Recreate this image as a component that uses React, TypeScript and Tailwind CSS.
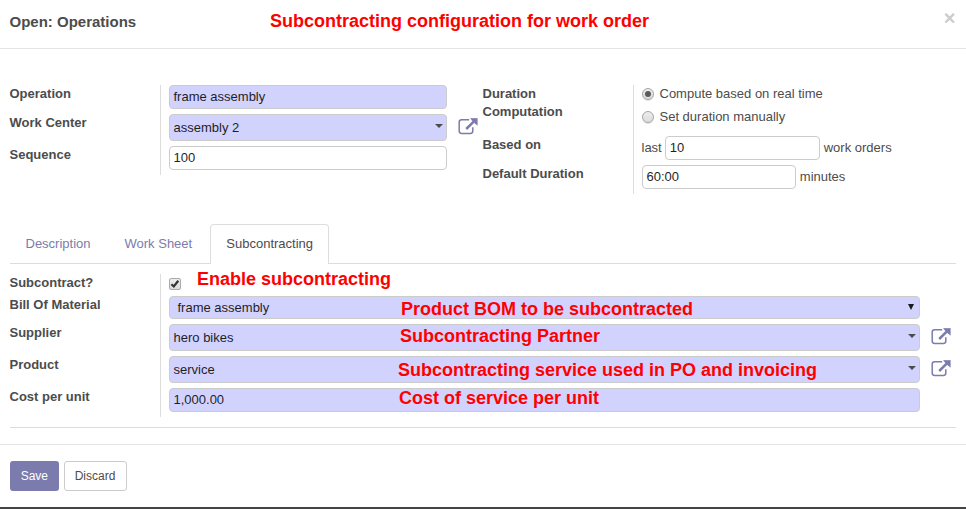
import type { ReactNode } from "react";

const field = "rounded border border-[#cccccc] pl-1 text-[#1f1f1f] flex items-center";

function Label({ children }: { children: ReactNode }) {
  return <div className="w-[150px] shrink-0 font-bold leading-[18px] text-[#4c4c4c]">{children}</div>;
}

function Row({ label, height, children }: { label: ReactNode; height: string; children: ReactNode }) {
  return (
    <div className={`flex ${height}`}>
      <Label>{label}</Label>
      <div className="flex flex-1 items-start border-l border-[#dddddd] pl-2">{children}</div>
    </div>
  );
}

function Caret() {
  return (
    <svg className="ml-auto mr-[3px] mt-[-4px] h-1 w-2 shrink-0" viewBox="0 0 8 4" fill="#4c4c4c">
      <path d="M0 0h8L4 4z" />
    </svg>
  );
}

function OpenIcon() {
  return (
    <svg className="ml-[11px] mt-1 h-[17px] w-5 shrink-0" viewBox="0 0 20 17" fill="none" stroke="#7c7bad">
      <path d="M11.2 1.8H3.6Q1.2 1.8 1.2 4.2V13Q1.2 15.4 3.6 15.4H12.4Q14.8 15.4 14.8 13V9.2" strokeWidth="1.5" />
      <path d="M8.2 11L16.2 3.1" strokeWidth="2.5" />
      <path d="M12.5 0.2H19.4V7.3L17.6 5.9L13.9 2.2z" fill="#7c7bad" stroke="#7c7bad" strokeWidth="0.4" />
    </svg>
  );
}

function Radio({ checked, label }: { checked?: boolean; label: string }) {
  return (
    <div className="flex h-[18px] items-center">
      <span className="flex size-3 items-center justify-center rounded-full border border-[#a5a5a5] bg-linear-to-b from-[#ededed] to-[#dcdcdc] shadow-[0_1px_0_#e2e2e2]">
        {checked && <span className="size-1.5 rounded-full bg-[#5b5b5b]" />}
      </span>
      <span className="ml-1.5">{label}</span>
    </div>
  );
}

function Note({ place, children }: { place: string; children: ReactNode }) {
  return (
    <div className={`absolute whitespace-nowrap text-[18px] font-bold leading-5 text-[#ff0000] ${place}`}>{children}</div>
  );
}

export default function App() {
  return (
    <div className="relative flex h-[509px] w-[966px] flex-col overflow-hidden bg-white font-['Liberation_Sans',Arial,sans-serif] text-[13px] leading-[18px] text-[#4c4c4c]">
      <header className="flex h-[49px] shrink-0 justify-between border-b border-[#e5e5e5] pl-[9.5px] pr-[10.5px]">
        <h4 className="pt-3 text-[15px] font-bold leading-5">Open: Operations</h4>
        <button className="h-5 pt-2 text-[20px] font-bold leading-5 text-[#cccccc]">×</button>
      </header>

      <main className="shrink-0 pl-[9.5px] pr-2.5 pt-9">
        <div className="flex h-[109px]">
          <div className="w-[473px]">
            <Row label="Operation" height="h-[29px]">
              <div className={`${field} h-6 w-[278px] bg-[#d2d2ff]`}>frame assembly</div>
            </Row>
            <Row label="Work Center" height="h-8">
              <div className={`${field} h-[27px] w-[278px] bg-[#d2d2ff]`}>assembly 2<Caret /></div>
              <OpenIcon />
            </Row>
            <Row label="Sequence" height="h-[29px]">
              <div className={`${field} h-6 w-[278px]`}>100</div>
            </Row>
          </div>
          <div className="flex-1">
            <Row label={<>Duration<br />Computation</>} height="h-[51px]">
              <div className="flex flex-col gap-[5px]">
                <Radio checked label="Compute based on real time" />
                <Radio label="Set duration manually" />
              </div>
            </Row>
            <Row label="Based on" height="h-[29px]">
              <span className="mr-[3px] pt-[3px]">last</span>
              <div className={`${field} h-6 w-[155px]`}>10</div>
              <span className="ml-1 pt-[3px]">work orders</span>
            </Row>
            <Row label="Default Duration" height="h-[29px]">
              <div className={`${field} h-6 w-[154.5px]`}>60:00</div>
              <span className="ml-[3.8px] pt-[3px]">minutes</span>
            </Row>
          </div>
        </div>

        <nav className="mt-[30px] flex h-10 border-b border-[#dddddd] leading-[38px] text-[#7c7bad]">
          <span className="w-[99px] pl-4 pt-px">Description</span>
          <span className="w-[101.5px] pl-4 pt-px">Work Sheet</span>
          <span className="h-10 w-[119px] rounded-t border border-b-0 border-[#dddddd] bg-white pl-[15.3px] text-[#4c4c4c]">
            Subcontracting
          </span>
        </nav>

        <section className="border-b border-[#dddddd] pb-2.5 pt-2.5">
          <Row label="Subcontract?" height="h-[22px]">
            <span className="mt-1 flex h-3 w-3 items-center justify-center rounded-[2px] border border-[#aaaaaa] bg-linear-to-b from-[#ededed] to-[#dcdcdc]">
              <svg className="size-2.5 shrink-0" viewBox="0 0 10 10" fill="none" stroke="#333333" strokeWidth="2.2">
                <path d="M1.4 5.3L3.8 7.5L8.3 1.8" />
              </svg>
            </span>
          </Row>
          <Row label="Bill Of Material" height="h-7">
            <div className={`${field} h-[23px] w-[751px] bg-[#d2d2ff]`}>
              <span className="pl-1">frame assembly</span>
              <svg className="ml-auto mr-[5px] mt-[-1px] h-1.5 w-1.5" viewBox="0 0 6 6" fill="#1a1a1a">
                <path d="M0 0h6L3 6z" />
              </svg>
            </div>
          </Row>
          <Row label="Supplier" height="h-8">
            <div className={`${field} h-[27px] w-[751px] bg-[#d2d2ff]`}>hero bikes<Caret /></div>
            <OpenIcon />
          </Row>
          <Row label="Product" height="h-8">
            <div className={`${field} h-[27px] w-[751px] bg-[#d2d2ff]`}>service<Caret /></div>
            <OpenIcon />
          </Row>
          <Row label="Cost per unit" height="h-[29px]">
            <div className={`${field} h-6 w-[751px] bg-[#d2d2ff]`}>1,000.00</div>
          </Row>
        </section>
      </main>

      <footer className="mt-4 flex h-[63px] shrink-0 gap-[5px] border-t border-[#e5e5e5] pl-2.5 pt-4 text-[12px]">
        <button className="h-[30px] w-[49px] rounded-[3px] bg-[#7c7bad] pr-[0.4px] text-white">Save</button>
        <button className="h-[30px] w-[63px] rounded-[3px] border border-[#cccccc] bg-white pr-px">Discard</button>
      </footer>
      <div className="h-0.5 shrink-0 bg-[#444444]" />

      <Note place="left-[270px] top-[11px]">Subcontracting configuration for work order</Note>
      <Note place="left-[197px] top-[269px]">Enable subcontracting</Note>
      <Note place="left-[401px] top-[299px]">Product BOM to be subcontracted</Note>
      <Note place="left-[400px] top-[326px]">Subcontracting Partner</Note>
      <Note place="left-[398px] top-[360px]">Subcontracting service used in PO and invoicing</Note>
      <Note place="left-[399px] top-[388px]">Cost of service per unit</Note>
    </div>
  );
}
